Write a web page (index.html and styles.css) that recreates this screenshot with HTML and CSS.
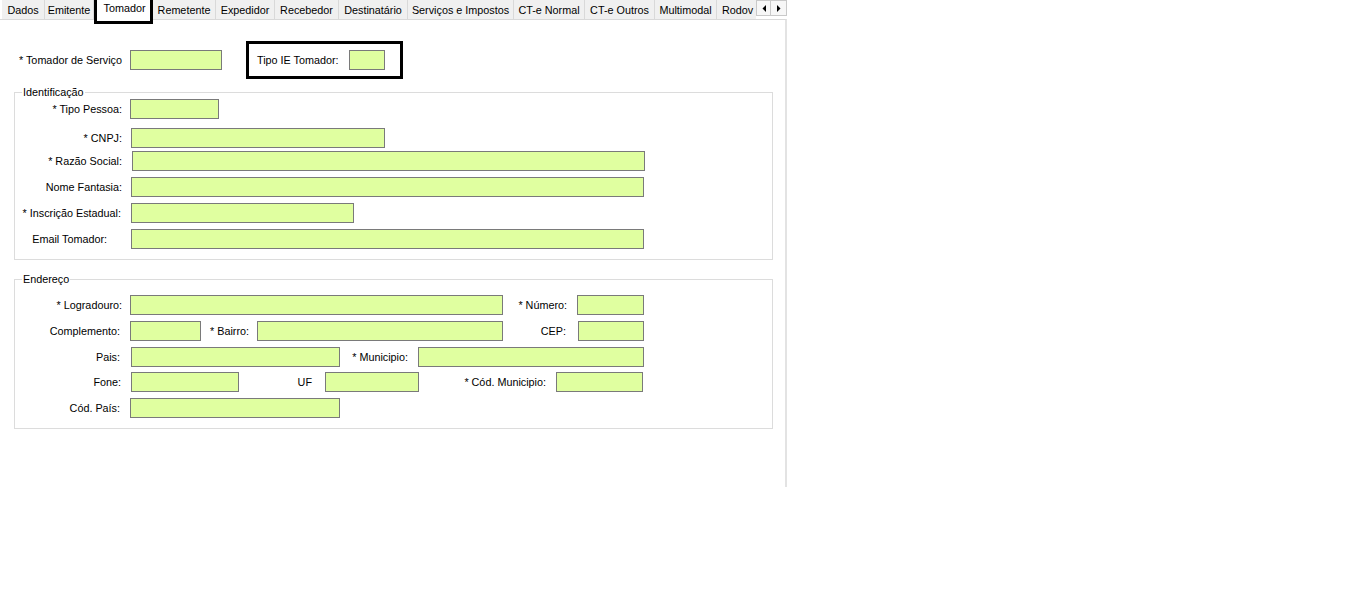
FILE: index.html
```html
<!DOCTYPE html>
<html lang="pt-BR">
<head>
<meta charset="utf-8">
<title>Tomador</title>
<link rel="stylesheet" href="styles.css">
</head>
<body>
<div class="tabctl">
  <div class="tabstrip">
    <div class="tabs">
      <div class="tab">Dados</div>
      <div class="tab">Emitente</div>
      <div class="tab tab-active">Tomador</div>
      <div class="tab">Remetente</div>
      <div class="tab">Expedidor</div>
      <div class="tab">Recebedor</div>
      <div class="tab">Destinatário</div>
      <div class="tab">Serviços e Impostos</div>
      <div class="tab">CT-e Normal</div>
      <div class="tab">CT-e Outros</div>
      <div class="tab">Multimodal</div>
      <div class="tab tab-clip">Rodov</div>
    </div>
    <div class="scroller">
      <span class="sbtn"><svg width="4" height="7" viewBox="0 0 4 7"><polygon points="4,0 4,7 0.5,3.5" fill="#000"/></svg></span>
      <span class="sbtn"><svg width="4" height="7" viewBox="0 0 4 7"><polygon points="0,0 0,7 3.5,3.5" fill="#000"/></svg></span>
    </div>
  </div>

  <div class="page">
    <div class="toprow">
      <span class="lbl lbl-servico">* Tomador de Serviço</span>
      <input class="in f-servico" type="text">
      <div class="ie-box">
        <span class="lbl-ie">Tipo IE Tomador:</span>
        <input class="in f-ie-tipo" type="text">
      </div>
    </div>

    <fieldset class="group group-ident">
      <legend>Identificação</legend>
      <div class="row r-tipo">
        <span class="lbl lbl-main">* Tipo Pessoa:</span>
        <input class="in f-tipo" type="text">
      </div>
      <div class="row r-cnpj">
        <span class="lbl lbl-main">* CNPJ:</span>
        <input class="in f-cnpj" type="text">
      </div>
      <div class="row r-razao">
        <span class="lbl lbl-main">* Razão Social:</span>
        <input class="in f-razao" type="text">
      </div>
      <div class="row r-next">
        <span class="lbl lbl-main">Nome Fantasia:</span>
        <input class="in f-fantasia" type="text">
      </div>
      <div class="row r-next">
        <span class="lbl lbl-main lbl-ie-est">* Inscrição Estadual:</span>
        <input class="in f-ie" type="text">
      </div>
      <div class="row r-next">
        <span class="lbl lbl-main lbl-email">Email Tomador:</span>
        <input class="in f-email" type="text">
      </div>
    </fieldset>

    <fieldset class="group group-end">
      <legend>Endereço</legend>
      <div class="row r-first">
        <span class="lbl lbl-main">* Logradouro:</span>
        <input class="in f-logradouro" type="text">
        <span class="lbl lbl-numero">* Número:</span>
        <input class="in f-numero" type="text">
      </div>
      <div class="row r-next">
        <span class="lbl lbl-main lbl-pr2">Complemento:</span>
        <input class="in f-complemento" type="text">
        <span class="lbl lbl-bairro">* Bairro:</span>
        <input class="in f-bairro" type="text">
        <span class="lbl lbl-cep">CEP:</span>
        <input class="in f-cep" type="text">
      </div>
      <div class="row r-next">
        <span class="lbl lbl-main lbl-pr2">Pais:</span>
        <input class="in f-pais" type="text">
        <span class="lbl lbl-municipio">* Municipio:</span>
        <input class="in f-municipio" type="text">
      </div>
      <div class="row r-fone">
        <span class="lbl lbl-main lbl-pr1">Fone:</span>
        <input class="in f-fone" type="text">
        <span class="lbl lbl-uf">UF</span>
        <input class="in f-uf" type="text">
        <span class="lbl lbl-codmun">* Cód. Municipio:</span>
        <input class="in f-codmun" type="text">
      </div>
      <div class="row r-next">
        <span class="lbl lbl-main lbl-pr2">Cód. País:</span>
        <input class="in f-codpais" type="text">
      </div>
    </fieldset>
  </div>
</div>
</body>
</html>
```

FILE: styles.css
```css
* { box-sizing: border-box; }

html, body {
  margin: 0;
  padding: 0;
  background: #ffffff;
}

body {
  font-family: "Liberation Sans", Arial, sans-serif;
  font-size: 10.8px;
  line-height: 13px;
  color: #000;
}

.tabctl {
  width: 787px;
}

/* ---------- tab strip ---------- */
.tabstrip {
  position: relative;
  height: 19px;
  overflow: visible;
}

.tabs {
  display: grid;
  grid-template-columns: 43px 49px 59px 63px 59px 64px 69px 106px 71px 70px 62px 40px;
  grid-template-rows: 19px;
  padding-left: 2px;
  width: 756px;
  overflow: hidden;
  height: 24px;
}

.tab {
  height: 19px;
  background: #f0f0f0;
  border-right: 1px solid #d9d9d9;
  padding-top: 4px;
  text-align: center;
  white-space: nowrap;
  overflow: hidden;
}

.tab-active {
  position: relative;
  z-index: 2;
  height: 24px;
  background: #ffffff;
  border: 3px solid #000;
  border-top: none;
  padding-top: 2px;
  padding-left: 2px;
}

.tab-clip {
  text-align: left;
  padding-left: 5px;
  border-right: none;
}

.scroller {
  position: absolute;
  top: 0;
  left: 756px;
  display: flex;
}

.sbtn {
  width: 15px;
  height: 16px;
  background: #f7f7f7;
  border: 1px solid #c9c9c9;
  display: flex;
  align-items: center;
  justify-content: center;
}

.sbtn + .sbtn {
  border-left: none;
  width: 16px;
}

/* ---------- page ---------- */
.page {
  position: relative;
  z-index: 1;
  height: 468px;
  border-top: 1px solid #d9d9d9;
  border-right: 2px solid #e3e3e3;
  background: #fff;
}

.in {
  display: block;
  flex: none;
  height: 20px;
  margin: 0;
  padding: 0;
  border: 1px solid #7a7a7a;
  background: #e0ffa0;
  font: inherit;
  outline: none;
}

.lbl {
  flex: none;
  text-align: right;
  white-space: nowrap;
}

/* top row */
.toprow {
  display: flex;
  align-items: center;
  margin-top: 21px;
  height: 38px;
}

.lbl-servico { width: 122px; }
.f-servico { margin-left: 8px; width: 92px; }

.ie-box {
  display: flex;
  align-items: center;
  margin-left: 24px;
  border: 3px solid #000;
  padding: 6px 15px 6px 8px;
}

.lbl-ie {
  width: 92px;
  white-space: nowrap;
}

.f-ie-tipo { width: 36px; }

/* group boxes */
.group {
  width: 759px;
  margin: 0 0 0 14px;
  padding: 0 0 10px 0;
  border: 1px solid #dcdcdc;
  min-width: 0;
}

.group legend {
  margin-left: 7px;
  padding: 0 1px;
  line-height: 13px;
}

.group-ident { margin-top: 7px; }
.group-end { margin-top: 13px; }

.row {
  display: flex;
  align-items: center;
  height: 20px;
}

.r-tipo { margin-top: 0; }
.r-cnpj { margin-top: 9px; }
.r-razao { margin-top: 3px; }
.r-next { margin-top: 6px; }
.r-first { margin-top: 9px; }
.r-fone { margin-top: 5px; }

.lbl-main { width: 107px; }
.lbl-ie-est { padding-right: 1px; }
.lbl-email { padding-right: 15px; }
.lbl-pr1 { padding-right: 1px; }
.lbl-pr2 { padding-right: 2px; }

/* identificação fields */
.f-tipo { margin-left: 8px; width: 89px; }
.f-cnpj { margin-left: 9px; width: 254px; }
.f-razao { margin-left: 10px; width: 513px; }
.f-fantasia { margin-left: 9px; width: 513px; }
.f-ie { margin-left: 9px; width: 223px; }
.f-email { margin-left: 9px; width: 513px; }

/* endereço fields */
.f-logradouro { margin-left: 8px; width: 373px; }
.lbl-numero { width: 64px; }
.f-numero { margin-left: 10px; width: 67px; }

.f-complemento { margin-left: 8px; width: 71px; }
.lbl-bairro { width: 48px; }
.f-bairro { margin-left: 8px; width: 246px; }
.lbl-cep { width: 63px; }
.f-cep { margin-left: 12px; width: 66px; }

.f-pais { margin-left: 9px; width: 209px; }
.lbl-municipio { width: 68px; }
.f-municipio { margin-left: 10px; width: 226px; }

.f-fone { margin-left: 9px; width: 108px; }
.lbl-uf { width: 73px; }
.f-uf { margin-left: 13px; width: 94px; }
.lbl-codmun { width: 127px; }
.f-codmun { margin-left: 10px; width: 87px; }

.f-codpais { margin-left: 8px; width: 210px; }
```
